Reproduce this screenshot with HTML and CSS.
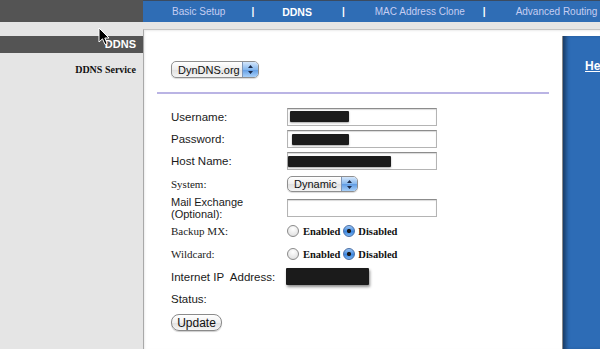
FILE: index.html
```html
<!DOCTYPE html>
<html lang="en">
  <head>
    <meta charset="UTF-8" />
    <title>DDNS</title>
    <link rel="stylesheet" href="styles.css">
  </head>
  <body class="body">
    <div class="top">
      <div class="top__brand"></div>
      <nav class="nav">
        <a class="nav__item" href="#">Basic Setup</a>
        <span class="nav__sep nav__sep--first">|</span>
        <a class="nav__item nav__item--current" href="#">DDNS</a>
        <span class="nav__sep">|</span>
        <a class="nav__item" href="#">MAC Address Clone</a>
        <span class="nav__sep nav__sep--last">|</span>
        <a class="nav__item" href="#">Advanced Routing</a>
      </nav>
    </div>
    <div class="main">
      <aside class="side">
        <div class="side__title">DDNS</div>
        <div class="side__label">DDNS Service</div>
      </aside>
      <div class="page">
        <div class="form">
          <div class="service">
            <div class="popup popup--service">
              <span class="popup__text">DynDNS.org</span>
              <span class="popup__arrows">
                <svg width="7" height="11" viewBox="0 0 7 11"><path d="M3.5 1 L6 4 L1 4 Z M3.5 10 L6 7 L1 7 Z" fill="#1c2b4a"/></svg>
              </span>
            </div>
          </div>
          <hr class="rule" />
          <div class="fields">
            <div class="label">Username:</div>
            <div class="text"><span class="mask mask--user"></span></div>

            <div class="label">Password:</div>
            <div class="text"><span class="mask mask--pass"></span></div>

            <div class="label">Host Name:</div>
            <div class="text"><span class="mask mask--host"></span></div>

            <div class="label label--serif">System:</div>
            <div>
              <div class="popup popup--system">
                <span class="popup__text">Dynamic</span>
                <span class="popup__arrows">
                  <svg width="7" height="11" viewBox="0 0 7 11"><path d="M3.5 1 L6 4 L1 4 Z M3.5 10 L6 7 L1 7 Z" fill="#1c2b4a"/></svg>
                </span>
              </div>
            </div>

            <div class="label label--two">Mail Exchange<br />(Optional):</div>
            <div class="text"></div>

            <div class="label label--serif">Backup MX:</div>
            <div class="radios">
              <span class="radio"></span><span>Enabled</span>
              <span class="radio radio--on"></span><span>Disabled</span>
            </div>

            <div class="label label--serif">Wildcard:</div>
            <div class="radios">
              <span class="radio"></span><span>Enabled</span>
              <span class="radio radio--on"></span><span>Disabled</span>
            </div>

            <div class="label">Internet IP&nbsp; Address:</div>
            <div><span class="mask mask--ip"></span></div>

            <div class="label">Status:</div>
            <div></div>
          </div>
          <button class="update" type="button">Update</button>
        </div>
        <div class="help"><a class="help__link" href="#">Help...</a></div>
      </div>
    </div>
    <svg class="cursor" width="13" height="19" viewBox="0 0 13 19">
      <path d="M1 1 L1 15 L4.5 11.8 L7 17.5 L9.2 16.6 L6.8 11 L11 11 Z" fill="#000" stroke="#fff" stroke-width="1"/>
    </svg>
  </body>
</html>
```

FILE: styles.css
```css
.body {
  margin: 0;
  background-color: #e5e5e5;
  font-family: "Liberation Sans", Arial, sans-serif;
  font-size: 12px;
  color: #111;
  overflow: hidden;
}
.top {
  display: flex;
  height: 22px;
}
.top__brand {
  width: 143px;
  background-color: #545454;
}
.nav {
  flex: 1;
  display: flex;
  align-items: center;
  background-color: #2f6db5;
  border-top: 1px solid #3b4b60;
  box-sizing: border-box;
  padding-left: 29px;
  font-size: 10px;
  white-space: nowrap;
}
.nav__item {
  color: #c6cdf2;
  text-decoration: none;
}
.nav__item--current {
  color: #fff;
  font-weight: bold;
  font-size: 10.5px;
}
.nav__sep {
  color: #fff;
  font-weight: bold;
  margin: 0 30px 0 30px;
}
.nav__sep--first {
  margin-left: 26px;
  margin-right: 28px;
}
.nav__sep--last {
  margin-left: 18px;
}
.main {
  display: flex;
  min-height: calc(100vh - 22px);
}
.side {
  width: 143px;
  flex-shrink: 0;
  padding-top: 14px;
  box-sizing: border-box;
}
.side__title {
  height: 17px;
  line-height: 17px;
  background-color: #545454;
  color: #fff;
  font-weight: bold;
  font-size: 11px;
  text-align: right;
  padding-right: 7px;
}
.side__label {
  margin-top: 11px;
  padding-right: 7px;
  text-align: right;
  font-family: "Liberation Serif", "Times New Roman", serif;
  font-weight: bold;
  font-size: 10px;
  line-height: 12px;
}
.page {
  flex: 1;
  display: flex;
  margin-top: 7px;
  background-color: #fff;
  border-top: 1px solid #c4c4c4;
  border-left: 1px solid #a9a9a9;
  box-shadow: inset 1px 1px 2px rgba(0, 0, 0, 0.08);
}
.form {
  flex: 1;
  padding: 31px 13px 0 13px;
}
.service {
  display: flex;
  padding-left: 14px;
}
.rule {
  margin: 14px 0 0 0;
  height: 2px;
  border: 0;
  background-color: #bab4e4;
}
.fields {
  display: grid;
  grid-template-columns: 116px 1fr;
  grid-template-rows: 23px 22px 22px 24px 23px 24px 22px 23px 21px;
  align-items: center;
  margin-top: 11px;
  padding-left: 14px;
}
.label {
  font-size: 11.5px;
  line-height: 14px;
  color: #1a1a1a;
}
.label--serif {
  font-family: "Liberation Serif", "Times New Roman", serif;
  font-size: 11px;
}
.label--two {
  font-size: 11px;
  line-height: 12px;
}
.popup {
  display: flex;
  align-items: center;
  height: 17px;
  box-sizing: border-box;
  border: 1px solid #8f8f8f;
  border-radius: 5px;
  overflow: hidden;
  background: linear-gradient(#fff, #eeeeee 50%, #e0e0e0 51%, #f4f4f4);
  box-shadow: 0 1px 1px rgba(0, 0, 0, 0.15);
  font-size: 11px;
}
.popup--service {
  width: 88px;
}
.popup--system {
  width: 71px;
  height: 16px;
}
.popup__text {
  flex: 1;
  padding-left: 6px;
}
.popup__arrows {
  align-self: stretch;
  width: 15px;
  display: flex;
  align-items: center;
  justify-content: center;
  border-left: 1px solid #7d95b8;
  background: linear-gradient(#d4e6fb, #86b8ee 50%, #5f9be3 51%, #a8d0f9);
}
.text {
  width: 150px;
  height: 18px;
  box-sizing: border-box;
  display: flex;
  align-items: center;
  background-color: #fff;
  border: 1px solid #b4b4b4;
  border-top-color: #8c8c8c;
  box-shadow: inset 0 1px 1px rgba(0, 0, 0, 0.15);
}
.mask {
  display: block;
  height: 11px;
  background-color: #1b1b1b;
  border-radius: 1px;
  box-shadow: 0 1px 2px rgba(0, 0, 0, 0.35);
}
.mask--user {
  width: 59px;
  margin-left: 2px;
}
.mask--pass {
  width: 57px;
  margin-left: 4px;
}
.mask--host {
  width: 103px;
}
.mask--ip {
  width: 83px;
  height: 17px;
  margin-left: -1px;
  box-shadow: 1px 2px 3px rgba(0, 0, 0, 0.45);
}
.radios {
  display: flex;
  align-items: center;
  font-family: "Liberation Serif", "Times New Roman", serif;
  font-weight: bold;
  font-size: 10.5px;
}
.radio {
  width: 12px;
  height: 12px;
  box-sizing: border-box;
  border-radius: 50%;
  border: 1px solid #8a8a8a;
  background: radial-gradient(circle at 50% 30%, #fff, #dadada);
  margin-right: 4px;
}
.radio--on {
  border-color: #4a6fa5;
  background: radial-gradient(circle, #1a1a1a 0 1.8px, transparent 2.4px),
    linear-gradient(#9cc6f4, #3c86de 55%, #7ab6f2);
  margin-left: 3px;
  margin-right: 3px;
}
.update {
  display: block;
  margin: 5px 0 0 14px;
  width: 51px;
  height: 17px;
  padding: 0;
  border: 1px solid #8a8a8a;
  border-radius: 8px;
  background: linear-gradient(#fff, #f0f0f0 50%, #e0e0e0 51%, #f6f6f6);
  box-shadow: 0 1px 1px rgba(0, 0, 0, 0.2);
  font-family: "Liberation Sans", Arial, sans-serif;
  font-size: 12px;
  color: #111;
}
.help {
  width: 38px;
  flex-shrink: 0;
  margin-top: 6px;
  box-sizing: border-box;
  padding: 23px 0 0 22px;
  background-color: #2d6cb6;
  border-left: 1px solid #8a8a8a;
  box-shadow: inset 5px 0 4px -2px rgba(0, 0, 0, 0.45);
  overflow: hidden;
  white-space: nowrap;
}
.help__link {
  color: #fff;
  font-weight: bold;
  font-size: 12px;
  text-decoration: underline;
}
.cursor {
  position: absolute;
  left: 98px;
  top: 27px;
}
```
